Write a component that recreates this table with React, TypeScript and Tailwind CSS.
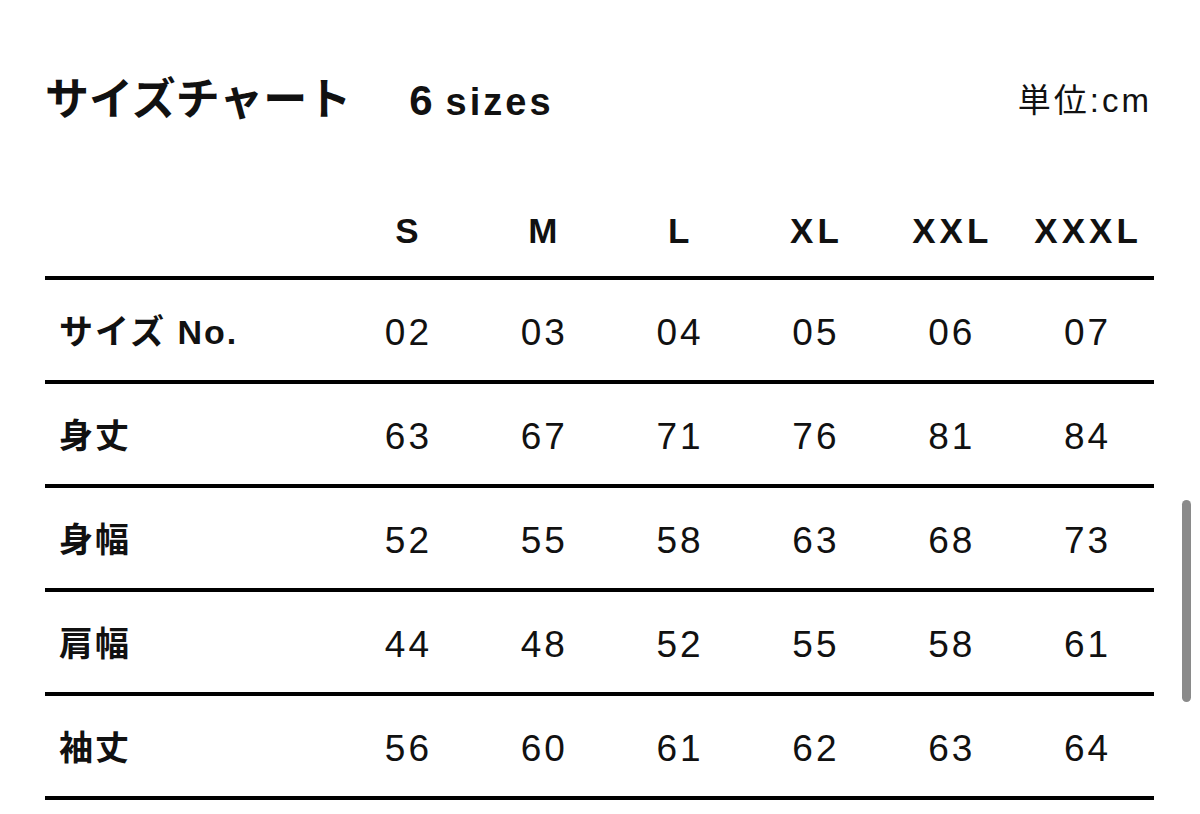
const sizes = ["S", "M", "L", "XL", "XXL", "XXXL"];

const rows: { label: string; values: string[] }[] = [
  { label: "サイズ No.", values: ["02", "03", "04", "05", "06", "07"] },
  { label: "身丈", values: ["63", "67", "71", "76", "81", "84"] },
  { label: "身幅", values: ["52", "55", "58", "63", "68", "73"] },
  { label: "肩幅", values: ["44", "48", "52", "55", "58", "61"] },
  { label: "袖丈", values: ["56", "60", "61", "62", "63", "64"] },
];

export default function App() {
  return (
    <div className="relative min-h-[814px] bg-white text-[#111] font-['Liberation_Sans','Noto_Sans_CJK_JP',sans-serif] overflow-hidden">
      <div className="pl-[45px] pr-[46px]">
        {/* Title */}
        <div className="mt-[70px] h-[60px] flex items-center justify-between">
          <div className="flex items-baseline font-bold">
            <span className="text-[44px] leading-none">サイズチャート</span>
            <span className="ml-[58px] text-[42px] leading-none">6</span>
            <span className="ml-[13px] text-[38px] leading-none tracking-[3px]">sizes</span>
          </div>
          <div className="text-[33px] leading-none tracking-[3px] mr-[2px]">単位:cm</div>
        </div>

        {/* Header */}
        <div className="mt-[54px] h-[96px] grid grid-cols-[294px_repeat(6,1fr)] items-center border-b-4 border-black">
          <div />
          {sizes.map((s) => (
            <div key={s} className="text-center font-bold text-[35px] leading-none tracking-[4px] pl-[4px]">
              {s}
            </div>
          ))}
        </div>

        {/* Rows */}
        {rows.map((r) => (
          <div
            key={r.label}
            className="h-[104px] pt-1 grid grid-cols-[294px_repeat(6,1fr)] items-center border-b-4 border-black"
          >
            <div className="pl-[14px] font-bold text-[34px] leading-none tracking-[2px]">{r.label}</div>
            {r.values.map((v, i) => (
              <div key={i} className="text-center text-[37px] leading-none tracking-[3px] pl-[3px]">
                {v}
              </div>
            ))}
          </div>
        ))}
      </div>

      {/* Scroll indicator */}
      <div className="absolute left-[1182px] top-[500px] w-[9px] h-[202px] rounded-full bg-[#8a8a8a]" />
    </div>
  );
}
